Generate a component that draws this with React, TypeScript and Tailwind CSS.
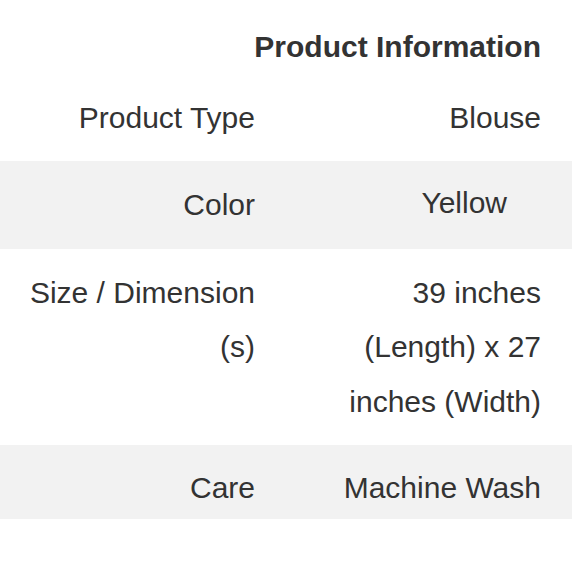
import React from "react";

type Row = { label: string; value: React.ReactNode; gray?: boolean; valueClass?: string; rowClass?: string };

const rows: Row[] = [
  { label: "Product Type", value: "Blouse", rowClass: "pt-[17px] pb-[16px]" },
  { label: "Color", value: "Yellow", gray: true, valueClass: "pr-[65px] -mt-[2px]", rowClass: "pt-[17px] pb-[16px]" },
  { label: "Size / Dimension (s)", value: "39 inches (Length) x 27 inches (Width)", rowClass: "pt-[17px] pb-[16px]" },
  { label: "Care", value: "Machine Wash", gray: true, rowClass: "pt-[16px] h-[74px]" },
];

export default function App() {
  return (
    <div className="w-[580px] h-[580px] bg-white text-[#333333] font-['Liberation_Sans',Arial,sans-serif]">
      <div className="w-[572px]">
        <div className="h-[73.5px] pt-[30px] pr-[31px] text-right text-[30px] font-bold leading-[34.5px]">
          Product Information
        </div>
        {rows.map((r, i) => (
          <div
            key={i}
            className={`grid grid-cols-[290px_1fr] text-[30px] leading-[54.5px] ${r.gray ? "bg-[#f2f2f2]" : "bg-white"} ${r.rowClass ?? ""}`}
          >
            <div className="pl-4 pr-[35px] text-right">{r.label}</div>
            <div className={`pl-[35px] text-right ${r.valueClass ?? "pr-[31px]"}`}>{r.value}</div>
          </div>
        ))}
      </div>
    </div>
  );
}
